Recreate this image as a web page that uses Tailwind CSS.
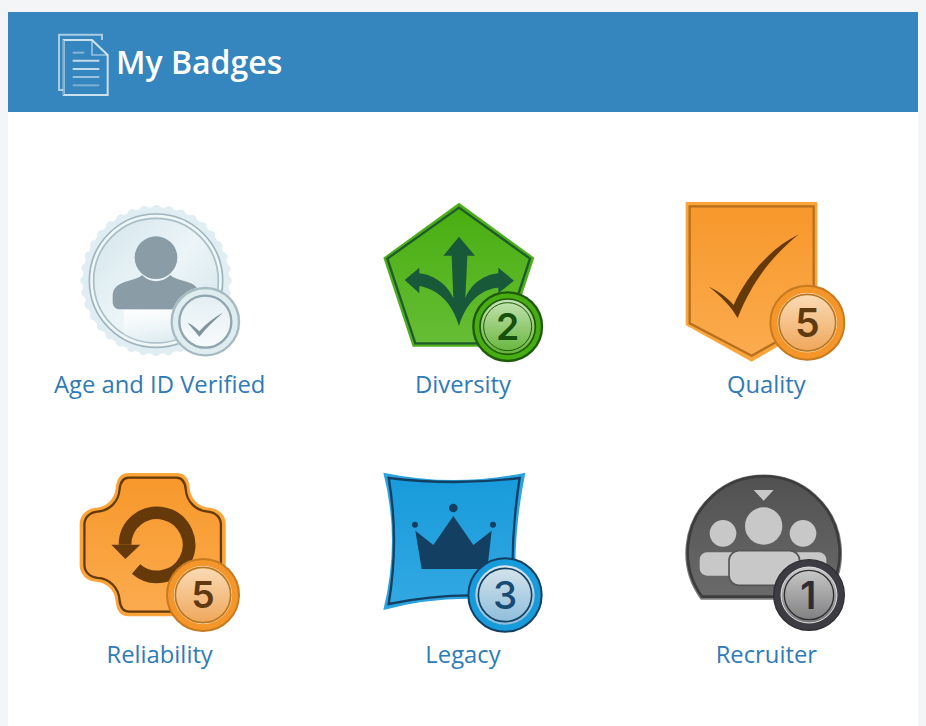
<!DOCTYPE html>
<html lang="en">
<head>
<meta charset="utf-8">
<title>My Badges</title>
<script src="https://cdn.jsdelivr.net/npm/@tailwindcss/browser@4"></script>
</head>
<body class="bg-[#f3f5f7] font-['Open_Sans',sans-serif]">
<div class="h-[726px] overflow-hidden pt-3 pl-2 pr-2">
  <main class="w-[910px] h-[714px] bg-white flex flex-col">
    <header class="h-[100px] bg-[#3585be] flex items-center pl-[49px] gap-[7px]">
      <svg class="mt-[6px] shrink-0" width="52" height="64" viewBox="170 100 156 190" fill="none">
        <path d="M190 270H176V104H305V120" stroke="#dbe9f3" stroke-opacity=".7" stroke-width="6"/>
        <path d="M190 120H275L322 165V285H190Z" stroke="#fff" stroke-opacity=".75" stroke-width="6"/>
        <path d="M190 120V285" stroke="#2c6d9e" stroke-opacity=".5" stroke-width="3"/>
        <path d="M275 120V165H322" stroke="#dbe9f3" stroke-opacity=".6" stroke-width="5"/>
        <path d="M217 158H252" stroke="#fff" stroke-opacity=".4" stroke-width="6"/>
        <path d="M217 182H297M217 207H297" stroke="#fff" stroke-opacity=".7" stroke-width="6"/>
        <path d="M217 231H297" stroke="#fff" stroke-opacity=".5" stroke-width="6"/>
        <path d="M217 256H297" stroke="#fff" stroke-opacity=".35" stroke-width="6"/>
      </svg>
      <h1 class="text-[32px] leading-none font-semibold text-white">My Badges</h1>
    </header>
    <section class="grid grid-cols-3 gap-y-[60px] pt-[78px]">

      <a class="flex flex-col items-center">
        <svg width="200" height="180" viewBox="-1 0 600 540">
          <defs>
            <linearGradient id="aDisc" x1="0" y1="0" x2="1" y2="1"><stop offset="0" stop-color="#d3e5ec"/><stop offset=".5" stop-color="#ecf5f8"/><stop offset="1" stop-color="#cfe2e9"/></linearGradient>
            <linearGradient id="aBadge" x1="0" y1="0" x2="0" y2="1"><stop offset="0" stop-color="#e4eff3"/><stop offset="1" stop-color="#f8fbfc"/></linearGradient>
            <linearGradient id="aStreak" x1="0" y1="0" x2="0" y2="1"><stop offset="0" stop-color="#fff" stop-opacity=".9"/><stop offset="1" stop-color="#fff" stop-opacity="0"/></linearGradient>
          </defs>
          <circle cx="287" cy="272" r="220" fill="#e0eef3"/>
          <circle cx="287" cy="272" r="213" fill="none" stroke="#e0eef3" stroke-width="28" stroke-linecap="round" stroke-dasharray="0 37.17"/>
          <circle cx="287" cy="272" r="200" fill="#eef6f8" stroke="#9fb4bc" stroke-width="5"/>
          <circle cx="287" cy="272" r="187" fill="url(#aDisc)" stroke="#a9bec6" stroke-width="5"/>
          <path d="M190 360H340V458H190Z" fill="url(#aStreak)"/>
          <circle cx="287" cy="203" r="64" fill="#8a9da6"/>
          <path d="M157 318C157 292 175 282 200 274C222 268 240 262 245 255C270 280 304 280 330 255C336 262 352 268 374 274C400 282 416 290 416 318V335C416 350 405 358 392 358H180C166 358 157 350 157 335Z" fill="#8a9da6"/>
          <circle cx="435" cy="395" r="105" fill="#f2f8fa"/>
          <circle cx="435" cy="395" r="101" fill="#dfecf0" stroke="#a6bac1" stroke-width="7"/>
          <circle cx="435" cy="395" r="78" fill="url(#aBadge)" stroke="#8fa6af" stroke-width="7"/>
          <path d="M381 398C395 403 408 414 417 424C436 402 462 382 488 368C462 392 438 412 417 440C405 425 393 410 381 398Z" fill="#7f949d"/>
        </svg>
        <span class="h-[30px] leading-[28px] text-[23.8px] text-[#2f7ab8] whitespace-nowrap">Age and ID Verified</span>
      </a>

      <a class="flex flex-col items-center">
        <svg width="190" height="180" viewBox="-6 0 570 540">
          <defs>
            <linearGradient id="dFill" x1="0" y1="0" x2="0" y2="1"><stop offset="0" stop-color="#49ae10"/><stop offset="1" stop-color="#66bd35"/></linearGradient>
            <linearGradient id="dCoin" x1="0" y1="0" x2="0" y2="1"><stop offset="0" stop-color="#c6e4b4"/><stop offset="1" stop-color="#63b338"/></linearGradient>
          </defs>
          <path d="M267 38L493 203L405 470H128L40 203Z" fill="#4fae1c"/>
          <path d="M267 53L480 206L396 460H136L52 206Z" fill="url(#dFill)" stroke="#1d5c2c" stroke-width="7"/>
          <path d="M267 140L315 197H292L286 325C300 288 335 255 385 250V233L432 272L385 310V293C340 296 290 330 267 408C245 330 195 296 148 288V310L104 270L148 233V250C195 255 235 288 250 325L245 197H220Z" fill="#18593a"/>
          <circle cx="413" cy="410" r="103" fill="#47ad12" stroke="#1f5a0b" stroke-width="7"/>
          <circle cx="413" cy="410" r="83" fill="url(#dCoin)" stroke="#1f5a0b" stroke-width="5"/>
          <circle cx="413" cy="410" r="72" fill="none" stroke="#1f5a0b" stroke-width="3"/>
          <text x="413" y="450" text-anchor="middle" font-family="Inter" font-weight="600" font-size="112" fill="#174f0d">2</text>
        </svg>
        <span class="h-[30px] leading-[28px] text-[23.8px] text-[#2f7ab8]">Diversity</span>
      </a>

      <a class="flex flex-col items-center">
        <svg width="190" height="180" viewBox="4 0 570 540">
          <defs>
            <linearGradient id="qFill" x1="0" y1="0" x2="0" y2="1"><stop offset="0" stop-color="#f7982b"/><stop offset="1" stop-color="#fbab4e"/></linearGradient>
            <linearGradient id="qCoin" x1="0" y1="0" x2="0" y2="1"><stop offset="0" stop-color="#fadbb5"/><stop offset="1" stop-color="#f0a75c"/></linearGradient>
          </defs>
          <path d="M48 36H443V400L246 515L48 405Z" fill="#fba43a"/>
          <path d="M60 49H432V394L246 497L60 400Z" fill="url(#qFill)" stroke="#b8701f" stroke-width="7"/>
          <path d="M118 290C150 305 175 325 192 345C230 260 300 175 388 133C310 195 250 270 204 384C185 350 155 320 118 290Z" fill="#66390a"/>
          <circle cx="413" cy="398" r="111" fill="#f4962a" stroke="#c77a20" stroke-width="6"/>
          <circle cx="413" cy="398" r="88" fill="url(#qCoin)" stroke="#fbe3c6" stroke-width="3"/>
          <circle cx="413" cy="398" r="85" fill="url(#qCoin)" stroke="#b97820" stroke-width="5"/>
          <text x="413" y="442" text-anchor="middle" font-family="Inter" font-weight="600" font-size="118" fill="#5f3a10">5</text>
        </svg>
        <span class="h-[30px] leading-[28px] text-[23.8px] text-[#2f7ab8]">Quality</span>
      </a>

      <a class="flex flex-col items-center">
        <svg width="190" height="180" viewBox="-1 0 570 540">
          <defs>
            <linearGradient id="rFill" x1="0" y1="0" x2="0" y2="1"><stop offset="0" stop-color="#f7982b"/><stop offset="1" stop-color="#fbab4e"/></linearGradient>
            <linearGradient id="rCoin" x1="0" y1="0" x2="0" y2="1"><stop offset="0" stop-color="#fadbb5"/><stop offset="1" stop-color="#f0a75c"/></linearGradient>
          </defs>
          <path d="M190 48H334C352 48 362 62 364 85C367 122 395 150 432 152C455 154 472 170 472 192V316C472 338 455 354 432 356C395 358 367 386 364 423C362 446 352 460 334 460H190C172 460 162 446 160 423C157 386 129 358 92 356C69 354 52 338 52 316V192C52 170 69 154 92 152C129 150 157 122 160 85C162 62 172 48 190 48Z" fill="#fba43a" stroke="#fba43a" stroke-width="18"/>
          <path transform="translate(262 254) scale(.975) translate(-262 -254)" d="M190 48H334C352 48 362 62 364 85C367 122 395 150 432 152C455 154 472 170 472 192V316C472 338 455 354 432 356C395 358 367 386 364 423C362 446 352 460 334 460H190C172 460 162 446 160 423C157 386 129 358 92 356C69 354 52 338 52 316V192C52 170 69 154 92 152C129 150 157 122 160 85C162 62 172 48 190 48Z" fill="url(#rFill)" stroke="#66390a" stroke-width="7"/>
          <path d="M179 254A96 96 0 1 1 212 327" fill="none" stroke="#66390a" stroke-width="38"/>
          <path d="M138 254H225L180 297Z" fill="#66390a"/>
          <circle cx="413" cy="405" r="108" fill="#f4962a" stroke="#c77a20" stroke-width="6"/>
          <circle cx="413" cy="405" r="86" fill="url(#rCoin)" stroke="#fbe3c6" stroke-width="3"/>
          <circle cx="413" cy="405" r="83" fill="url(#rCoin)" stroke="#b97820" stroke-width="5"/>
          <text x="413" y="445" text-anchor="middle" font-family="Inter" font-weight="600" font-size="112" fill="#5f3a10">5</text>
        </svg>
        <span class="h-[30px] leading-[28px] text-[23.8px] text-[#2f7ab8]">Reliability</span>
      </a>

      <a class="flex flex-col items-center">
        <svg width="190" height="180" viewBox="-6 0 570 540">
          <defs>
            <linearGradient id="lFill" x1="0" y1="0" x2="0" y2="1"><stop offset="0" stop-color="#189bdb"/><stop offset="1" stop-color="#32a8e2"/></linearGradient>
            <linearGradient id="lCoin" x1="0" y1="0" x2="0" y2="1"><stop offset="0" stop-color="#d8e5ec"/><stop offset="1" stop-color="#8bbcdb"/></linearGradient>
          </defs>
          <path d="M40 38Q250 82 466 38Q425 240 440 430Q250 395 40 450Q92 240 40 38Z" fill="#2aa3e0"/>
          <path d="M56 54Q250 78 449 54Q420 240 430 414Q250 392 56 432Q88 240 56 54Z" fill="url(#lFill)" stroke="#133f63" stroke-width="7"/>
          <path d="M250 168L310 255L365 212L352 327H155L136 212L190 255Z" fill="#133f63"/>
          <circle cx="250" cy="144" r="13" fill="#133f63"/>
          <circle cx="135" cy="194" r="9" fill="#133f63"/>
          <circle cx="369" cy="194" r="9" fill="#133f63"/>
          <circle cx="405" cy="405" r="110" fill="#189bdb" stroke="#133f63" stroke-width="6"/>
          <circle cx="405" cy="405" r="89" fill="url(#lCoin)"/>
          <circle cx="405" cy="405" r="80" fill="none" stroke="#133f63" stroke-width="5"/>
          <text x="405" y="447" text-anchor="middle" font-family="Inter" font-weight="500" font-size="116" fill="#174a75">3</text>
        </svg>
        <span class="h-[30px] leading-[28px] text-[23.8px] text-[#2f7ab8]">Legacy</span>
      </a>

      <a class="flex flex-col items-center">
        <svg width="190" height="180" viewBox="4 0 570 540">
          <defs>
            <linearGradient id="tFill" x1="0" y1="0" x2="0" y2="1"><stop offset="0" stop-color="#515151"/><stop offset="1" stop-color="#6a6a6a"/></linearGradient>
            <linearGradient id="tCoin" x1="0" y1="0" x2="0" y2="1"><stop offset="0" stop-color="#cccccc"/><stop offset="1" stop-color="#7b7b7d"/></linearGradient>
          </defs>
          <path d="M97 412A228 228 0 1 1 467 412Z" fill="#7c7c7c" stroke="#7c7c7c" stroke-width="14"/>
          <path d="M97 410A228 228 0 1 1 467 410Z" fill="url(#tFill)" stroke="#3c3c3e" stroke-width="8"/>
          <path d="M252 90H312L282 122Z" fill="#c8c8c8"/>
          <circle cx="282" cy="198" r="56" fill="#c8c8c8"/>
          <circle cx="160" cy="220" r="40" fill="#c8c8c8"/>
          <circle cx="400" cy="220" r="40" fill="#c8c8c8"/>
          <rect x="90" y="277" width="120" height="70" rx="22" fill="#c8c8c8"/>
          <rect x="350" y="277" width="120" height="70" rx="22" fill="#c8c8c8"/>
          <rect x="178" y="272" width="212" height="104" rx="30" fill="#c8c8c8" stroke="#555" stroke-width="5"/>
          <circle cx="418" cy="405" r="106" fill="#3c3c42" stroke="#2f2f33" stroke-width="4"/>
          <circle cx="418" cy="405" r="84" fill="url(#tCoin)" stroke="#e2e2e2" stroke-width="3"/>
          <circle cx="418" cy="405" r="74" fill="none" stroke="#2f2f33" stroke-width="4"/>
          <text x="416" y="447" text-anchor="middle" font-family="Inter" font-weight="600" font-size="114" fill="#2d2d33">1</text>
        </svg>
        <span class="h-[30px] leading-[28px] text-[23.8px] text-[#2f7ab8]">Recruiter</span>
      </a>

    </section>
  </main>
</div>
</body>
</html>
